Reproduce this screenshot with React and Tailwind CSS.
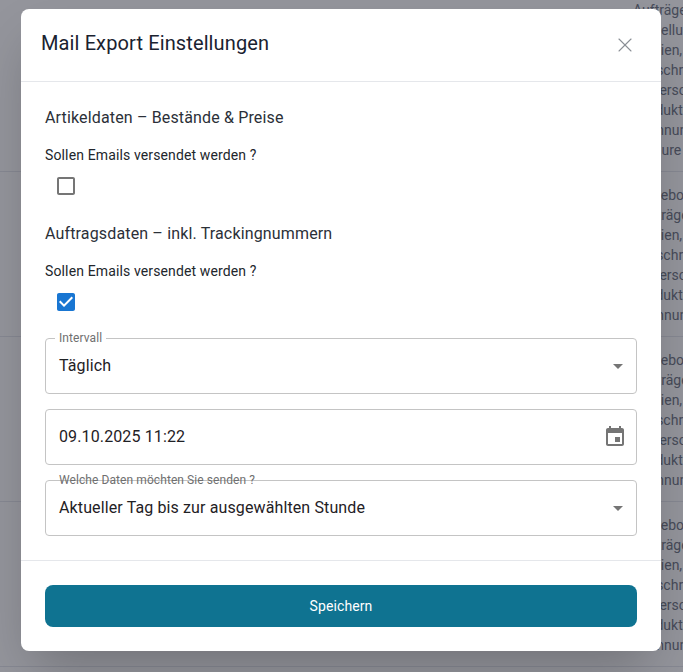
import { X } from 'lucide-react'

const topRow = [
  ['Aufträge', 'ml-[633px]'],
  ['Bestellungen', 'ml-[633px]'],
  ['Dateien, Listen', 'ml-[632px]'],
  ['Beschreibung', 'ml-[640px]'],
  ['Unterschrift', 'ml-[638px]'],
  ['Produkte', 'ml-[634px]'],
  ['Benennungen', 'ml-[625px]'],
  ['Prozedure', 'ml-[618px]'],
]

const row = [
  ['Angebote', 'ml-[636px]'],
  ['Aufträge', 'ml-[635px]'],
  ['Dateien, Listen', 'ml-[632px]'],
  ['Beschreibung', 'ml-[640px]'],
  ['Unterschrift', 'ml-[638px]'],
  ['Produkte', 'ml-[634px]'],
  ['Benennungen', 'ml-[625px]'],
]

const Background = () => (
  <div className="bg-white h-[672px] overflow-hidden text-[14px] leading-[20px] text-[#6b7280]">
    <div className="h-[172px] border-b border-[#e5e7eb] whitespace-nowrap">
      {topRow.map(([text, offset]) => (
        <div key={text} className={offset}>{text}</div>
      ))}
    </div>
    {[0, 1, 2].map((i) => (
      <div key={i} className="h-[165px] border-b border-[#e5e7eb] pt-[13px] whitespace-nowrap">
        {row.map(([text, offset]) => (
          <div key={text} className={offset}>{text}</div>
        ))}
      </div>
    ))}
  </div>
)

const Caret = () => (
  <svg width="24" height="24" viewBox="0 0 24 24" className="text-[#757575] -mr-[3px]" fill="currentColor">
    <path d="M7 10l5 5 5-5z" />
  </svg>
)

const CalendarIcon = () => (
  <svg width="24" height="24" viewBox="0 0 24 24" className="text-[#757575]" fill="currentColor">
    <path d="M17 12h-5v5h5v-5zM16 1v2H8V1H6v2H5c-1.11 0-1.99.9-1.99 2L3 19c0 1.1.89 2 2 2h14c1.1 0 2-.9 2-2V5c0-1.1-.9-2-2-2h-1V1h-2zm3 18H5V8h14v11z" />
  </svg>
)

const Field = ({ label, notch, value, icon }) => (
  <div className="relative h-[56px] border border-[#c4c4c4] rounded-[4px] flex items-center justify-between pl-[13px] pr-[9px] text-[16px] text-[#1f2125] tracking-[0.12px]">
    {label && (
      <span className={`absolute left-[9px] -top-[7px] px-[4px] text-[12px] leading-[12px] text-[#6f6f6f] tracking-[0.08px] ${notch ? 'bg-white' : ''}`}>
        {label}
      </span>
    )}
    <span>{value}</span>
    {icon}
  </div>
)

const Check = ({ checked }) => (
  <div className="ml-[9px] mt-[9px] h-[24px]">
    {checked ? (
      <svg width="24" height="24" viewBox="0 0 24 24" fill="#1976d2">
        <path d="M19 3H5c-1.11 0-2 .9-2 2v14c0 1.1.89 2 2 2h14c1.11 0 2-.9 2-2V5c0-1.11-.89-2-2-2zm-9 14l-5-5 1.41-1.41L10 14.17l7.59-7.59L19 8l-9 9z" />
      </svg>
    ) : (
      <svg width="24" height="24" viewBox="0 0 24 24" fill="#757575">
        <path d="M19 5v14H5V5h14m0-2H5c-1.1 0-2 .9-2 2v14c0 1.1.9 2 2 2h14c1.1 0 2-.9 2-2V5c0-1.1-.9-2-2-2z" />
      </svg>
    )}
  </div>
)

export default function App() {
  return (
    <div className="relative h-[672px] overflow-hidden" style={{ fontFamily: 'Roboto, sans-serif' }}>
      <Background />
      {/* backdrop */}
      <div className="absolute inset-0 bg-[#1f2230]/48" />

      {/* dialog */}
      <div className="absolute left-[21px] top-[9px] w-[640px] h-[642px] bg-white rounded-[8px] shadow-2xl flex flex-col">
        <div className="h-[73px] border-b border-[#e5e7eb] flex items-center justify-between pl-[20px] pr-[24px] shrink-0">
          <h2 className="mb-[4px] text-[20px] text-[#1a2230] tracking-[0.12px]">Mail Export Einstellungen</h2>
          <X size={24} strokeWidth={1.1} className="text-[#8b8f96]" />
        </div>

        <div className="px-[24px] pt-[25px] flex-1 text-[#1f2937]">
          <h3 className="text-[16px] leading-[22px] tracking-[0.15px] text-[#2b3038]">Artikeldaten – Bestände &amp; Preise</h3>
          <p className="mt-[16px] text-[14px] leading-[20px] tracking-[0.13px] text-[#22262c]">Sollen Emails versendet werden ?</p>
          <Check />
          <h3 className="mt-[25px] text-[16px] leading-[22px] tracking-[0.15px] text-[#2b3038]">Auftragsdaten – inkl. Trackingnummern</h3>
          <p className="mt-[16px] text-[14px] leading-[20px] tracking-[0.13px] text-[#22262c]">Sollen Emails versendet werden ?</p>
          <Check checked />
          <div className="mt-[24px] flex flex-col gap-[15px]">
            <Field label="Intervall" notch value="Täglich" icon={<Caret />} />
            <Field value="09.10.2025 11:22" icon={<CalendarIcon />} />
            <Field label="Welche Daten möchten Sie senden ?" value="Aktueller Tag bis zur ausgewählten Stunde" icon={<Caret />} />
          </div>
        </div>

        <div className="h-[91px] border-t border-[#e5e7eb] px-[24px] pt-[24px] shrink-0">
          <button className="w-full h-[42px] rounded-[8px] bg-[#0f7391] text-white text-[14px] tracking-[0.1px]">Speichern</button>
        </div>
      </div>
    </div>
  )
}
